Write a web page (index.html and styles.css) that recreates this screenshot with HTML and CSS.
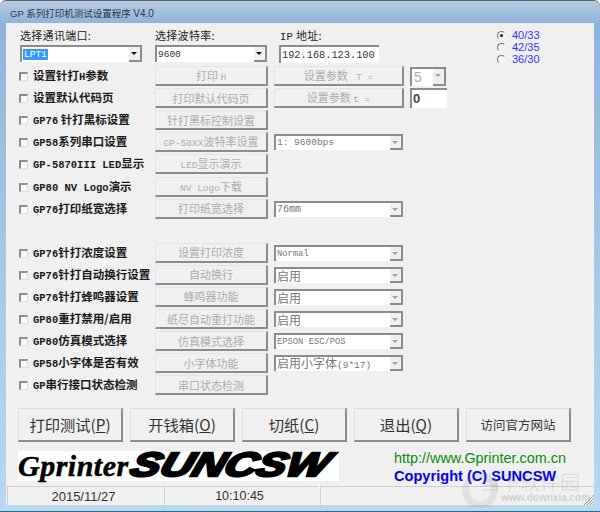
FILE: index.html
```html
<!DOCTYPE html>
<html lang="zh-CN">
<head>
<meta charset="utf-8">
<title>GP 系列打印机测试设置程序 V4.0</title>
<link rel="stylesheet" href="styles.css">
</head>
<body>
<div class="window">
  <div class="title">GP 系列打印机测试设置程序 <span class="ver">V4.0</span></div>
  <div class="client">
    <div class="top">
      <div class="field f-port">
        <label class="cap">选择通讯端口:</label>
        <div class="combo on"><span class="val"><span class="sel">LPT1</span></span><span class="arrow"></span></div>
      </div>
      <div class="field f-baud">
        <label class="cap">选择波特率:</label>
        <div class="combo on"><span class="val">9600</span><span class="arrow"></span></div>
      </div>
      <div class="field f-ip">
        <label class="cap"><span class="en">IP</span> 地址:</label>
        <div class="edit ip">192.168.123.100</div>
      </div>
      <div class="radios">
        <label class="radio"><input type="radio" name="w" checked>40/33</label>
        <label class="radio"><input type="radio" name="w">42/35</label>
        <label class="radio"><input type="radio" name="w">36/30</label>
      </div>
    </div>
    <div class="options">
      <div class="row"><label class="lbl"><input type="checkbox">设置针打<span class="en">H</span>参数</label><button class="btn">打印 <span class="en">H</span></button><button class="btn wide">设置参数 <span class="en">&nbsp;T =</span></button><div class="combo small off big"><span class="val">5</span><span class="arrow"></span></div></div>
      <div class="row"><label class="lbl"><input type="checkbox">设置默认代码页</label><button class="btn">打印默认代码页</button><button class="btn wide">设置参数 <span class="en">t =</span></button><div class="edit zero">0</div></div>
      <div class="row"><label class="lbl"><input type="checkbox"><span class="en">GP76</span> 针打黑标设置</label><button class="btn">针打黑标控制设置</button></div>
      <div class="row"><label class="lbl"><input type="checkbox"><span class="en">GP58</span>系列串口设置</label><button class="btn"><span class="en">GP-58XX</span>波特率设置</button><div class="combo off"><span class="val mono s">1: 9600bps</span><span class="arrow"></span></div></div>
      <div class="row"><label class="lbl"><input type="checkbox"><span class="en">GP-5870III LED</span>显示</label><button class="btn"><span class="en">LED</span>显示演示</button></div>
      <div class="row"><label class="lbl"><input type="checkbox"><span class="en">GP80 NV Logo</span>演示</label><button class="btn"><span class="en">NV Logo</span>下载</button></div>
      <div class="row"><label class="lbl"><input type="checkbox"><span class="en">GP76</span>打印纸宽选择</label><button class="btn">打印纸宽选择</button><div class="combo off"><span class="val mono">76mm</span><span class="arrow"></span></div></div>
      <div class="row"></div>
      <div class="row"><label class="lbl"><input type="checkbox"><span class="en">GP76</span>针打浓度设置</label><button class="btn">设置打印浓度</button><div class="combo off"><span class="val mono xs">Normal</span><span class="arrow"></span></div></div>
      <div class="row"><label class="lbl"><input type="checkbox"><span class="en">GP76</span>针打自动换行设置</label><button class="btn">自动换行</button><div class="combo off"><span class="val">启用</span><span class="arrow"></span></div></div>
      <div class="row"><label class="lbl"><input type="checkbox"><span class="en">GP76</span>针打蜂鸣器设置</label><button class="btn">蜂鸣器功能</button><div class="combo off"><span class="val">启用</span><span class="arrow"></span></div></div>
      <div class="row"><label class="lbl"><input type="checkbox"><span class="en">GP80</span>重打禁用/启用</label><button class="btn">纸尽自动重打功能</button><div class="combo off"><span class="val">启用</span><span class="arrow"></span></div></div>
      <div class="row"><label class="lbl"><input type="checkbox"><span class="en">GP80</span>仿真模式选择</label><button class="btn">仿真模式选择</button><div class="combo off"><span class="val mono xs">EPSON ESC/POS</span><span class="arrow"></span></div></div>
      <div class="row"><label class="lbl"><input type="checkbox"><span class="en">GP58</span>小字体是否有效</label><button class="btn">小字体功能</button><div class="combo off"><span class="val">启用小字体<span class="mono s">(9*17)</span></span><span class="arrow"></span></div></div>
      <div class="row"><label class="lbl"><input type="checkbox"><span class="en">GP</span>串行接口状态检测</label><button class="btn">串口状态检测</button></div>
    </div>
    <div class="actions">
      <button class="act">打印测试(<u>P</u>)</button>
      <button class="act">开钱箱(<u>O</u>)</button>
      <button class="act">切纸(<u>C</u>)</button>
      <button class="act">退出(<u>Q</u>)</button>
      <button class="act site">访问官方网站</button>
    </div>
    <div class="brand">
      <div class="logo"><span class="lg-a">Gprinter</span><span class="lg-b">SUNCSW</span></div>
      <div class="links">
        <div class="url">http://www.Gprinter.com.cn</div>
        <div class="copy">Copyright (C) SUNCSW</div>
      </div>
    </div>
    <div class="status">
      <div class="pane p1">2015/11/27</div>
      <div class="pane p2">10:10:45</div>
      <div class="pane p3"><svg class="grip" width="11" height="11" viewBox="0 0 11 11"><path d="M1 11 11 1M4 11 11 4M7 11 11 7M10 11 11 10" stroke="#9a9a9a" fill="none"/></svg></div>
    </div>
  </div>
  <div class="mark">
    <div class="mark-ring"></div>
    <div class="mark-cn">当下软件园</div>
    <div class="mark-en">www.downxia.com</div>
  </div>
</div>
</body>
</html>
```
FILE: styles.css
```css
* { box-sizing: border-box; }
html, body { margin: 0; padding: 0; background: #fff; }
body {
  width: 600px;
  height: 512px;
  overflow: hidden;
  font-family: "Noto Sans CJK SC", "Liberation Sans", sans-serif;
  font-size: 12px;
  color: #222;
}
.window {
  position: relative;
  width: 600px;
  height: 512px;
  display: flex;
  flex-direction: column;
  border-radius: 6px 6px 0 0;
  border-top: 1px solid #5f6468;
  border-bottom: 1px solid #1f6f8a;
  background: linear-gradient(to bottom, #b7cde2 0, #8fb4da 22px, #a9cbea 300px, #b9d7f0 100%);
}
.title {
  height: 22px;
  padding: 2px 0 0 10px;
  line-height: 22px;
  font-size: 9.5px;
  color: #2c3440;
  font-family: "Liberation Sans", "Noto Sans CJK SC", sans-serif;
  flex: none;
}
.ver { font-size: 10px; }
.client {
  height: 482px;
  margin: 0 6px;
  background: #f0f0f0;
  padding-left: 13px;
  flex: none;
}
.top {
  height: 42px;
  display: flex;
  position: relative;
}
.field { display: flex; flex-direction: column; }
.f-port { width: 136px; }
.f-baud { width: 124px; }
.f-ip { width: 218px; }
.cap {
  height: 22px;
  line-height: 24px;
  font-size: 11px;
  letter-spacing: .3px;
  margin-left: 1px;
  color: #222;
}
.f-baud .cap, .f-baud .combo { margin-left: 0; }
.f-port .combo { width: 122px; height: 17px; margin-left: 1px; }
.f-baud .combo { width: 112px; height: 17px; }
.en { font-family: "Liberation Mono", monospace; font-size: 10.5px; }
.combo {
  display: flex;
  align-items: center;
  width: 129px;
  height: 16px;
  background: #fff;
  border-top: 2px solid #8c8c8c;
  border-left: 2px solid #8c8c8c;
  position: relative;
}
.combo .val {
  flex: 1;
  padding-left: 1px;
  white-space: pre;
  line-height: 14px;
  font-size: 12px;
}
.mono, .combo .val.mono, .combo .val .mono { font-family: "Liberation Mono", monospace; font-size: 10px; }
.combo .val.s, .combo .val .s { font-size: 9.5px; }
.combo .val.xs { font-size: 8.8px; }
.combo.on .val { font-family: "Liberation Mono", monospace; font-size: 9.5px; color: #333; }
.combo.off .val { color: #777; }
.combo.big { width: 36px; height: 19px; }
.combo.big .val { font-family: "Liberation Sans", sans-serif; font-size: 14px; color: #aaa; padding-left: 2px; }
.sel { background: #3399ff; color: #fff; padding: 0 1px; }
.arrow {
  width: 13px;
  align-self: stretch;
  background: #f0f0f0;
  border-right: 2px solid #8c8c8c;
  border-bottom: 2px solid #8c8c8c;
  position: relative;
  flex: none;
}
.arrow::after {
  content: "";
  position: absolute;
  left: 2px;
  top: 5px;
  border-left: 3px solid transparent;
  border-right: 3px solid transparent;
  border-top: 3px solid #a0a0a0;
}
.on .arrow::after { border-top-color: #111; }
.edit {
  background: #fff;
  border-top: 2px solid #8c8c8c;
  border-left: 2px solid #8c8c8c;
}
.ip {
  width: 100px;
  height: 18px;
  line-height: 16px;
  font-family: "Liberation Mono", monospace;
  font-size: 10.3px;
  color: #333;
  padding-left: 1px;
  white-space: nowrap;
}
.zero {
  width: 37px;
  height: 20px;
  line-height: 17px;
  font-family: "Liberation Sans", sans-serif;
  font-weight: bold;
  font-size: 13px;
  color: #444;
  padding-left: 1px;
}
.radios {
  display: flex;
  flex-direction: column;
  margin-top: 6px;
}
.radio {
  display: flex;
  align-items: center;
  height: 13px;
  font-family: "Liberation Sans", sans-serif;
  font-size: 11px;
  color: #3333ff;
}
.radio input {
  appearance: none;
  width: 9px;
  height: 9px;
  margin: 0 6px 0 0;
  border-radius: 50%;
  border: 1px solid #f0f0f0;
  border-top-color: #777;
  border-left-color: #777;
  background: #f4f4f4;
  position: relative;
}
.radio input:checked::after {
  content: "";
  position: absolute;
  left: 2px;
  top: 2px;
  width: 3px;
  height: 3px;
  border-radius: 50%;
  background: #222;
}
.row {
  display: grid;
  grid-template-columns: 136px 119px 136px auto;
  align-items: center;
  height: 22.1px;
}
.row > .combo.off:not(.big) { grid-column: 3; }
.lbl {
  display: block;
  height: 22px;
  line-height: 20px;
  font-weight: bold;
  font-size: 11.5px;
  white-space: pre;
  color: #1a1a1a;
}
.lbl .en { font-size: 10.5px; }
.lbl input {
  appearance: none;
  display: inline-block;
  width: 9px;
  height: 9px;
  margin: 0 5px 0 0;
  vertical-align: -1px;
  background: #fafafa;
  border-top: 2px solid #8c8c8c;
  border-left: 2px solid #8c8c8c;
  border-right: 1px solid #ddd;
  border-bottom: 1px solid #ddd;
}
.btn {
  width: 113px;
  height: 20px;
  padding: 0;
  background: #f0f0f0;
  border: 1px solid #e4e4e4;
  border-right: 2px solid #8c8c8c;
  border-bottom: 2px solid #8c8c8c;
  color: #adadad;
  font-family: inherit;
  font-size: 11px;
  white-space: pre;
  line-height: 16px;
}
.btn .en { font-size: 9.5px; }
.btn.wide { width: 130px; }
.actions {
  display: flex;
  gap: 7px;
  margin: 11.5px 0 0 -1px;
}
.act {
  width: 105px;
  height: 34px;
  padding: 0;
  background: #f0f0f0;
  border: 1px solid #dcdcdc;
  border-right: 2px solid #8c8c8c;
  border-bottom: 2px solid #8c8c8c;
  color: #333;
  font-family: inherit;
  font-size: 15.3px;
}
.act.site { font-size: 12.5px; }
.brand {
  display: flex;
  margin: 9px 0 0 -1px;
  height: 30px;
}
.logo {
  width: 321px;
  height: 30px;
  background: #fff;
  color: #000;
  white-space: nowrap;
  display: flex;
}
.lg-a {
  font-family: "Liberation Serif", serif;
  font-weight: bold;
  font-style: italic;
  font-size: 30px;
  line-height: 30px;
  letter-spacing: .5px;
  -webkit-text-stroke: .5px #000;
  width: 114px;
  flex: none;
}
.lg-b {
  font-family: "Liberation Sans", sans-serif;
  font-weight: bold;
  font-style: italic;
  font-size: 30px;
  line-height: 28px;
  height: 28px;
  flex: none;
  transform-origin: left center;
  transform: scale(1.48, 1.12) skewX(-14deg);
  -webkit-text-stroke: 2.2px #000;
}
.links {
  margin-left: 55px;
  margin-top: -2px;
  font-family: "Liberation Sans", sans-serif;
  white-space: nowrap;
}
.url { color: #0a8a0a; font-size: 14.4px; line-height: 18px; }
.copy { color: #0000ee; font-size: 14.6px; font-weight: bold; line-height: 18px; }
.status {
  display: flex;
  height: 19px;
  margin: 5px 0 0 -12px;
  position: relative;
}
.pane {
  border-top: 1px solid #cfcfcf;
  border-left: 1px solid #cfcfcf;
  text-align: center;
  font-family: "Liberation Sans", sans-serif;
  font-size: 13px;
  line-height: 19px;
  color: #333;
}
.p1 { width: 157px; padding-right: 5px; }
.p2 { width: 154px; font-size: 12.5px; padding-right: 4px; }
.p3 { flex: 1; position: relative; margin-left: 2px; }
.grip { position: absolute; right: 0; bottom: 0; }
.mark { position: absolute; left: 460px; top: 466px; width: 130px; height: 42px; pointer-events: none; }
.mark-ring {
  position: absolute;
  left: 2px;
  top: 5px;
  width: 36px;
  height: 36px;
  border-radius: 50%;
  border: 7px solid rgba(120,120,120,.13);
}
.mark-cn {
  position: absolute;
  left: 20px;
  top: 3px;
  font-size: 20px;
  line-height: 24px;
  white-space: nowrap;
  color: rgba(120,120,120,.16);
}
.mark-en {
  position: absolute;
  left: 41px;
  top: 25px;
  font-family: "Liberation Sans", sans-serif;
  font-weight: bold;
  font-size: 10px;
  line-height: 12px;
  color: rgba(120,120,120,.28);
  white-space: nowrap;
}
```
